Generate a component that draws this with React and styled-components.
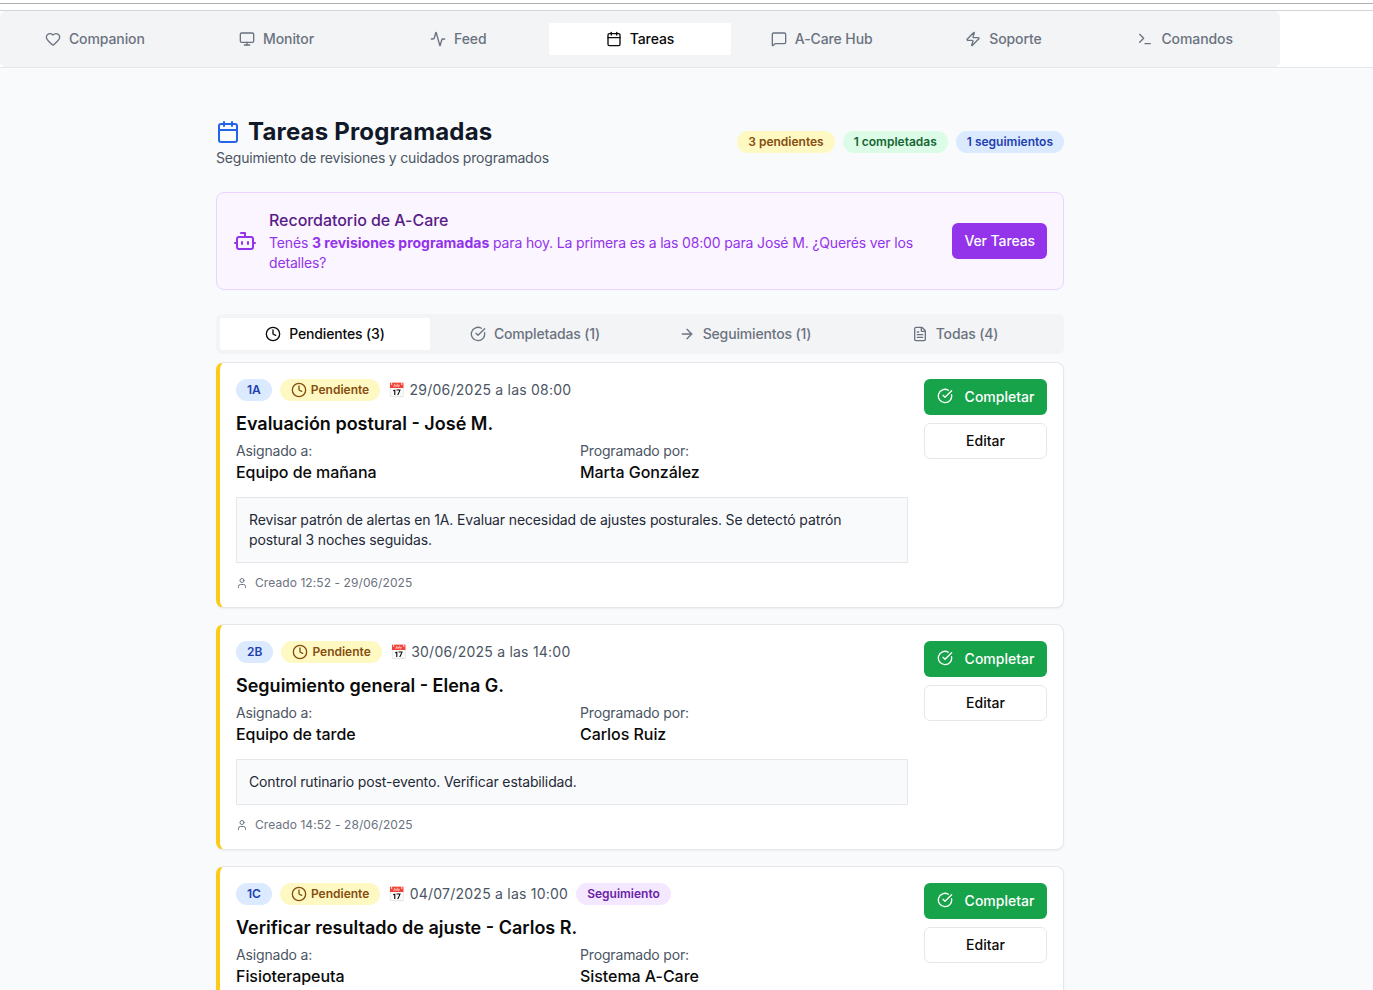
import styled, { createGlobalStyle } from 'styled-components';
import {
  Activity,
  ArrowRight,
  Bot,
  Calendar,
  CircleCheckBig,
  Clock,
  FileText,
  Heart,
  MessageSquare,
  Monitor,
  Terminal,
  User,
  Zap,
} from 'lucide-react';

const GlobalStyle = createGlobalStyle`
  html, body {
    margin: 0;
    padding: 0;
    height: 100%;
    overflow: hidden;
    background: #f9fafb;
  }
  * { box-sizing: border-box; }
  #root {
    font-family: Inter, "Liberation Sans", sans-serif;
    color: #0a0a0a;
  }
`;

const pillColors = {
  yellow: { bg: '#fef9c3', fg: '#854d0e' },
  green: { bg: '#dcfce7', fg: '#166534' },
  blue: { bg: '#dbeafe', fg: '#1e40af' },
  purple: { bg: '#f3e8ff', fg: '#6b21a8' },
};

const Page = styled.div`
  height: 100vh;
  overflow: hidden;
`;

const TopStrip = styled.div`
  height: 11px;
  padding-top: 3px;
  background: #fff;
  border-bottom: 1px solid #d4d4d4;
  &::before {
    content: '';
    display: block;
    height: 1px;
    background: #b0b0b0;
  }
`;

const Header = styled.header`
  background: #fff;
  border-bottom: 1px solid #e5e7eb;
`;

const NavBar = styled.nav`
  width: 1280px;
  height: 56px;
  padding: 0 4px;
  display: grid;
  grid-template-columns: repeat(7, 1fr);
  align-items: center;
  background: #f3f4f6;
  border-radius: 6px;
`;

const NavTab = styled.div`
  height: 32px;
  display: flex;
  align-items: center;
  justify-content: center;
  gap: 8px;
  font-size: 14px;
  font-weight: 500;
  line-height: 20px;
  letter-spacing: -0.1px;
  border-radius: 2px;
  color: ${(p) => (p.$active ? '#0a0a0a' : '#6b7280')};
  background: ${(p) => (p.$active ? '#fff' : 'transparent')};
`;

const Content = styled.main`
  width: 1280px;
`;

const Column = styled.div`
  width: 848px;
  margin: 0 auto;
  padding-top: 48px;
`;

const TitleRow = styled.div`
  display: flex;
  align-items: center;
  justify-content: space-between;
`;

const TitleLine = styled.div`
  display: flex;
  align-items: center;
  gap: 8px;
  color: #2563eb;
`;

const PageTitle = styled.h1`
  margin: 0;
  font-size: 24px;
  line-height: 32px;
  font-weight: 700;
  letter-spacing: 0.17px;
  color: #111827;
`;

const Subtitle = styled.p`
  margin: 0;
  font-size: 14px;
  line-height: 20px;
  letter-spacing: -0.2px;
  color: #4b5563;
`;

const PillGroup = styled.div`
  display: flex;
  gap: 8px;
`;

const Pill = styled.span`
  display: inline-flex;
  align-items: center;
  gap: 4px;
  height: 22px;
  padding: 0 11px;
  border-radius: 999px;
  font-size: 12px;
  line-height: 16px;
  font-weight: 600;
  white-space: nowrap;
  background: ${(p) => pillColors[p.$tone].bg};
  color: ${(p) => pillColors[p.$tone].fg};
`;

const Reminder = styled.section`
  margin-top: 24px;
  padding: 16px;
  display: flex;
  align-items: center;
  gap: 12px;
  background: #faf5ff;
  border: 1px solid #e9d5ff;
  border-radius: 8px;
  color: #9333ea;
`;

const ReminderBody = styled.div`
  flex: 1;
`;

const ReminderTitle = styled.h3`
  margin: 0 0 2px;
  font-size: 16px;
  line-height: 22px;
  font-weight: 500;
  letter-spacing: -0.05px;
  color: #581c87;
`;

const ReminderText = styled.p`
  margin: 0;
  font-size: 14px;
  line-height: 20px;
  letter-spacing: -0.16px;
  color: #9333ea;
  strong {
    font-weight: 700;
    letter-spacing: 0;
  }
`;

const BaseButton = styled.button`
  height: 36px;
  padding: 0 12px 2px;
  display: flex;
  align-items: center;
  justify-content: center;
  font-family: inherit;
  font-size: 14px;
  font-weight: 500;
  border-radius: 6px;
  cursor: pointer;
`;

const ReminderButton = styled(BaseButton)`
  border: none;
  background: #9333ea;
  color: #fff;
  letter-spacing: -0.1px;
  flex-shrink: 0;
`;

const TabList = styled.div`
  margin-top: 24px;
  height: 40px;
  padding: 4px;
  display: grid;
  grid-template-columns: repeat(4, 1fr);
  background: #f3f4f6;
  border-radius: 6px;
`;

const Tab = styled.div`
  display: flex;
  align-items: center;
  justify-content: center;
  gap: 8px;
  padding-bottom: 1px;
  font-size: 14px;
  font-weight: 500;
  letter-spacing: -0.15px;
  border-radius: 2px;
  color: ${(p) => (p.$active ? '#0a0a0a' : '#6b7280')};
  background: ${(p) => (p.$active ? '#fff' : 'transparent')};
`;

const TaskList = styled.div`
  margin-top: 8px;
  display: flex;
  flex-direction: column;
  gap: 16px;
`;

const TaskCard = styled.article`
  padding: 16px;
  display: flex;
  gap: 16px;
  background: #fff;
  border: 1px solid #e5e7eb;
  border-left: 4px solid #facc15;
  border-radius: 8px;
  box-shadow: 0 1px 2px rgba(0, 0, 0, 0.05);
`;

const TaskMain = styled.div`
  flex: 1;
  min-width: 0;
`;

const MetaRow = styled.div`
  display: flex;
  align-items: center;
  gap: 8px;
`;

const DateText = styled.span`
  font-size: 14px;
  line-height: 20px;
  letter-spacing: 0.23px;
  color: #4b5563;
  white-space: nowrap;
`;

const TaskTitle = styled.h3`
  margin: 9px 0 3px;
  font-size: 18px;
  line-height: 28px;
  font-weight: 600;
`;

const PeopleGrid = styled.div`
  display: grid;
  grid-template-columns: 1fr 1fr;
  gap: 16px;
`;

const PersonLabel = styled.div`
  font-size: 14px;
  line-height: 20px;
  letter-spacing: -0.16px;
  color: #4b5563;
`;

const PersonName = styled.div`
  margin-bottom: 2px;
  font-size: 16px;
  line-height: 22px;
  font-weight: 500;
  letter-spacing: -0.05px;
`;

const Note = styled.div`
  margin-top: 12px;
  padding: 12px;
  font-size: 14px;
  line-height: 20px;
  letter-spacing: -0.13px;
  color: #1f2937;
  background: #f9fafb;
  border: 1px solid #e5e7eb;
`;

const CreatedLine = styled.div`
  margin-top: 12px;
  display: flex;
  align-items: center;
  gap: 7px;
  font-size: 12px;
  line-height: 16px;
  letter-spacing: 0.08px;
  color: #6b7280;
`;

const TaskActions = styled.div`
  display: flex;
  flex-direction: column;
  gap: 8px;
  width: 123px;
  flex-shrink: 0;
`;

const CompleteButton = styled(BaseButton)`
  gap: 12px;
  border: none;
  background: #16a34a;
  color: #fff;
`;

const EditButton = styled(BaseButton)`
  background: #fff;
  border: 1px solid #e5e7eb;
  color: #0a0a0a;
`;

const navItems = [
  { label: 'Companion', Icon: Heart },
  { label: 'Monitor', Icon: Monitor },
  { label: 'Feed', Icon: Activity },
  { label: 'Tareas', Icon: Calendar, active: true },
  { label: 'A-Care Hub', Icon: MessageSquare },
  { label: 'Soporte', Icon: Zap },
  { label: 'Comandos', Icon: Terminal },
];

const tabs = [
  { label: 'Pendientes (3)', Icon: Clock, active: true },
  { label: 'Completadas (1)', Icon: CircleCheckBig },
  { label: 'Seguimientos (1)', Icon: ArrowRight },
  { label: 'Todas (4)', Icon: FileText },
];

const tasks = [
  {
    room: '1A',
    date: '29/06/2025 a las 08:00',
    title: 'Evaluación postural - José M.',
    assigned: 'Equipo de mañana',
    by: 'Marta González',
    note: 'Revisar patrón de alertas en 1A. Evaluar necesidad de ajustes posturales. Se detectó patrón postural 3 noches seguidas.',
    created: 'Creado 12:52 - 29/06/2025',
  },
  {
    room: '2B',
    date: '30/06/2025 a las 14:00',
    title: 'Seguimiento general - Elena G.',
    assigned: 'Equipo de tarde',
    by: 'Carlos Ruiz',
    note: 'Control rutinario post-evento. Verificar estabilidad.',
    created: 'Creado 14:52 - 28/06/2025',
  },
  {
    room: '1C',
    date: '04/07/2025 a las 10:00',
    title: 'Verificar resultado de ajuste - Carlos R.',
    assigned: 'Fisioterapeuta',
    by: 'Sistema A-Care',
    followUp: true,
  },
];

const App = () => {
  return (
    <Page>
      <GlobalStyle />
      <TopStrip />
      <Header>
        <NavBar>
          {navItems.map(({ label, Icon, active }) => (
            <NavTab key={label} $active={active}>
              <Icon size={16} />
              {label}
            </NavTab>
          ))}
        </NavBar>
      </Header>
      <Content>
        <Column>
          <TitleRow>
            <div>
              <TitleLine>
                <Calendar size={24} />
                <PageTitle>Tareas Programadas</PageTitle>
              </TitleLine>
              <Subtitle>Seguimiento de revisiones y cuidados programados</Subtitle>
            </div>
            <PillGroup>
              <Pill $tone="yellow">3 pendientes</Pill>
              <Pill $tone="green">1 completadas</Pill>
              <Pill $tone="blue">1 seguimientos</Pill>
            </PillGroup>
          </TitleRow>

          <Reminder>
            <Bot size={24} />
            <ReminderBody>
              <ReminderTitle>Recordatorio de A-Care</ReminderTitle>
              <ReminderText>
                Tenés <strong>3 revisiones programadas</strong> para hoy. La primera es a las 08:00 para José M. ¿Querés ver los detalles?
              </ReminderText>
            </ReminderBody>
            <ReminderButton>Ver Tareas</ReminderButton>
          </Reminder>

          <TabList>
            {tabs.map(({ label, Icon, active }) => (
              <Tab key={label} $active={active}>
                <Icon size={16} />
                {label}
              </Tab>
            ))}
          </TabList>

          <TaskList>
            {tasks.map((task) => (
              <TaskCard key={task.room}>
                <TaskMain>
                  <MetaRow>
                    <Pill $tone="blue">{task.room}</Pill>
                    <Pill $tone="yellow">
                      <Clock size={16} />
                      Pendiente
                    </Pill>
                    <DateText>📅 {task.date}</DateText>
                    {task.followUp && <Pill $tone="purple">Seguimiento</Pill>}
                  </MetaRow>
                  <TaskTitle>{task.title}</TaskTitle>
                  <PeopleGrid>
                    <div>
                      <PersonLabel>Asignado a:</PersonLabel>
                      <PersonName>{task.assigned}</PersonName>
                    </div>
                    <div>
                      <PersonLabel>Programado por:</PersonLabel>
                      <PersonName>{task.by}</PersonName>
                    </div>
                  </PeopleGrid>
                  {task.note && <Note>{task.note}</Note>}
                  {task.created && (
                    <CreatedLine>
                      <User size={12} />
                      {task.created}
                    </CreatedLine>
                  )}
                </TaskMain>
                <TaskActions>
                  <CompleteButton>
                    <CircleCheckBig size={16} />
                    Completar
                  </CompleteButton>
                  <EditButton>Editar</EditButton>
                </TaskActions>
              </TaskCard>
            ))}
          </TaskList>
        </Column>
      </Content>
    </Page>
  );
};

export default App;
